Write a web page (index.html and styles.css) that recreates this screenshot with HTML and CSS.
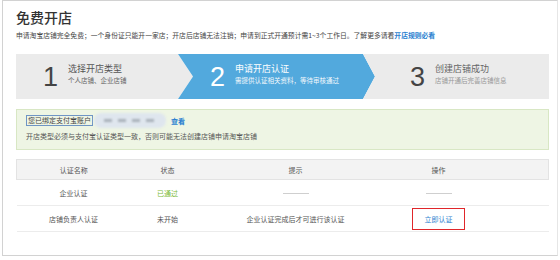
FILE: index.html
```html
<!DOCTYPE html>
<html>
<head>
  <meta charset="utf-8">
  <title>免费开店</title>
  <link rel="stylesheet" href="styles.css">
</head>
<body>
  <div class="panel">
    <h1 class="title">免费开店</h1>
    <p class="intro">申请淘宝店铺完全免费；一个身份证只能开一家店；开店后店铺无法注销；申请到正式开通预计需1~3个工作日。了解更多请看<a class="rule-link">开店规则必看</a></p>

    <div class="steps">
      <div class="step step-first">
        <span class="step-num">1</span>
        <div class="step-text">
          <div class="step-title">选择开店类型</div>
          <div class="step-desc">个人店铺、企业店铺</div>
        </div>
      </div>
      <div class="step step-current">
        <span class="step-num">2</span>
        <div class="step-text">
          <div class="step-title">申请开店认证</div>
          <div class="step-desc">需提供认证相关资料，等待审核通过</div>
        </div>
      </div>
      <div class="step step-last">
        <span class="step-num">3</span>
        <div class="step-text">
          <div class="step-title">创建店铺成功</div>
          <div class="step-desc">店铺开通后完善店铺信息</div>
        </div>
      </div>
    </div>

    <div class="notice">
      <div class="notice-line">
        <span class="bound">您已绑定支付宝账户</span>
        <span class="masked"><i></i><i></i><i></i><i></i></span>
        <a class="view-link">查看</a>
      </div>
      <div class="notice-line notice-tip">开店类型必须与支付宝认证类型一致，否则可能无法创建店铺申请淘宝店铺</div>
    </div>

    <table class="auth-table">
      <colgroup>
        <col class="c-name">
        <col class="c-state">
        <col class="c-tip">
        <col class="c-op">
        <col>
      </colgroup>
      <thead>
        <tr>
          <th>认证名称</th>
          <th>状态</th>
          <th>提示</th>
          <th>操作</th>
          <th></th>
        </tr>
      </thead>
      <tbody>
        <tr>
          <td>企业认证</td>
          <td class="state-ok">已通过</td>
          <td><span class="dash"></span></td>
          <td><span class="dash"></span></td>
          <td></td>
        </tr>
        <tr>
          <td>店铺负责人认证</td>
          <td>未开始</td>
          <td>企业认证完成后才可进行该认证</td>
          <td><a class="auth-btn">立即认证</a></td>
          <td></td>
        </tr>
      </tbody>
    </table>
  </div>
</body>
</html>
```

FILE: styles.css
```css
body {
  margin: 0;
  font-family: "Noto Sans CJK SC", "Liberation Sans", sans-serif;
  color: #333;
  background: #fff;
}
.panel {
  margin-left: 2px;
  width: 533px;
  height: 254px;
  padding: 0 8px 0 13px;
  border: 1px solid #d2d2d2;
  border-right-color: #e6e6e6;
}
.title {
  margin: 0;
  padding-top: 7px;
  font-size: 14px;
  line-height: 18px;
  font-weight: 500;
  color: #333;
}
.intro {
  margin: 4px 0 0;
  font-size: 6.8px;
  line-height: 10px;
  color: #444;
}
.rule-link {
  color: #2a7fd0;
  font-weight: bold;
}

.steps {
  display: flex;
  height: 45px;
  margin-top: 14px;
}
.step {
  display: flex;
  align-items: center;
  background: #ebebeb;
  color: #555;
}
.step-first {
  width: 150px;
  padding-left: 27px;
  clip-path: polygon(0 0, calc(100% - 15px) 0, 100% 50%, calc(100% - 15px) 100%, 0 100%);
}
.step-current {
  width: 165px;
  margin-left: -15px;
  padding-left: 32px;
  background: #52a9dd;
  color: #fff;
  clip-path: polygon(0 0, calc(100% - 12px) 0, 100% 50%, calc(100% - 12px) 100%, 0 100%, 15px 50%);
}
.step-last {
  flex: 1;
  margin-left: -12px;
  padding-left: 47px;
  clip-path: polygon(0 0, 100% 0, 100% 100%, 0 100%, 12px 50%);
}
.step-num {
  width: 25px;
  font-family: "Liberation Sans", sans-serif;
  font-size: 27px;
  font-weight: normal;
  line-height: 30px;
  color: #444;
}
.step-current .step-num {
  color: #fff;
}
.step-text {
  margin-top: -4px;
}
.step-title {
  font-size: 9px;
  line-height: 12px;
}
.step-desc {
  font-size: 6.5px;
  line-height: 11px;
  color: #666;
}
.step-current .step-desc {
  color: #f2f8fc;
}
.step-last .step-title {
  color: #666;
}
.step-last .step-desc {
  color: #999;
}

.notice {
  margin-top: 10px;
  height: 36px;
  padding: 3px 9px 0;
  background: #eef5e4;
  border: 1px solid #d8e7c4;
}
.notice-line {
  display: flex;
  align-items: center;
  height: 15px;
  font-size: 7px;
  color: #555;
}
.bound {
  padding: 0 1px;
  line-height: 9px;
  border: 1px solid #6f95c4;
  color: #444;
}
.masked {
  display: flex;
  align-items: center;
  gap: 6px;
  width: 62px;
  height: 15px;
  margin-left: 1px;
  padding-left: 10px;
  background: #dfe6ee;
  border-radius: 7px;
  filter: blur(1px);
}
.masked i {
  display: block;
  width: 8px;
  height: 3px;
  background: #a9b1ba;
}
.view-link {
  margin-left: 5px;
  color: #2a7fd0;
  font-weight: bold;
}

.auth-table {
  width: 533px;
  margin-top: 9px;
  border-collapse: collapse;
  table-layout: fixed;
  font-size: 7px;
  color: #555;
}
.c-name { width: 114px; }
.c-state { width: 74px; }
.c-tip { width: 182px; }
.c-op { width: 104px; }
.auth-table th {
  height: 19px;
  padding: 0;
  font-weight: normal;
  background: #f3f3f3;
  border: 1px solid #e3e3e3;
  border-left: none;
  border-right: none;
}
.auth-table thead tr th:first-child {
  border-left: 1px solid #e3e3e3;
}
.auth-table thead tr th:last-child {
  border-right: 1px solid #e3e3e3;
}
.auth-table td {
  height: 25px;
  padding: 0;
  text-align: center;
  border-bottom: 1px solid #ececec;
}
.state-ok {
  color: #7dbb3c;
}
.dash {
  display: inline-block;
  width: 26px;
  height: 1px;
  vertical-align: middle;
  background: #cfcfcf;
}
.auth-btn {
  display: inline-block;
  width: 51px;
  height: 20px;
  line-height: 20px;
  border: 1px solid #e0262a;
  color: #2a7fd0;
}
```
